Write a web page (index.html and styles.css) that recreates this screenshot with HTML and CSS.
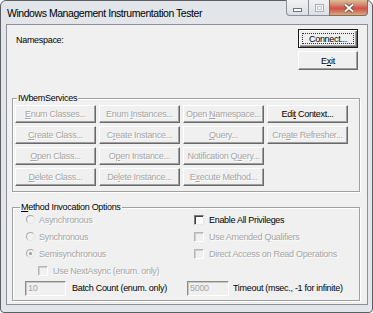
FILE: index.html
```html
<!DOCTYPE html>
<html lang="en">
<head>
	<meta charset="UTF-8">
	<title>Windows Management Instrumentation Tester</title>
	<link rel="stylesheet" href="styles.css">
</head>
<body>
	<div class="window">
		<div class="titlebar">
			<span class="title">Windows Management Instrumentation Tester</span>
			<div class="caption">
				<span class="cap-btn cap-min">
					<svg width="9" height="4" viewBox="0 0 9 4"><rect x="0.5" y="0.5" width="8" height="3" fill="#fff" stroke="#70757d"/></svg>
				</span>
				<span class="cap-btn cap-max">
					<svg width="9" height="8" viewBox="0 0 9 8"><rect x="0.5" y="0.5" width="8" height="7" fill="#f4f5f7" stroke="#a9adb4"/><rect x="2.5" y="2.5" width="4" height="3" fill="none" stroke="#c4c7cc"/></svg>
				</span>
				<span class="cap-btn cap-close">
					<svg width="12" height="10" viewBox="0 0 12 10"><path d="M2 1.5l8 7M10 1.5l-8 7" stroke="#5a4a44" stroke-width="3.4"/><path d="M2 1.5l8 7M10 1.5l-8 7" stroke="#fff" stroke-width="1.8"/></svg>
				</span>
			</div>
		</div>
		<div class="client">
			<div class="top">
				<span class="label">Namespace:</span>
				<div class="side">
					<div class="btn default"><span class="focus">Connect...</span></div>
					<div class="btn"><span>E<u>x</u>it</span></div>
				</div>
			</div>
			<fieldset class="group services">
				<legend>IWbemServices</legend>
				<div class="grid">
					<div class="btn off"><span><u>E</u>num Classes...</span></div>
					<div class="btn off"><span>Enum <u>I</u>nstances...</span></div>
					<div class="btn off"><span>Open <u>N</u>amespace...</span></div>
					<div class="btn"><span>Edi<u>t</u> Context...</span></div>
					<div class="btn off"><span><u>C</u>reate Class...</span></div>
					<div class="btn off"><span>C<u>r</u>eate Instance...</span></div>
					<div class="btn off"><span><u>Q</u>uery...</span></div>
					<div class="btn off"><span>Cre<u>a</u>te Refresher...</span></div>
					<div class="btn off"><span><u>O</u>pen Class...</span></div>
					<div class="btn off"><span>O<u>p</u>en Instance...</span></div>
					<div class="btn off"><span>Notification Q<u>u</u>ery...</span></div>
					<div></div>
					<div class="btn off"><span><u>D</u>elete Class...</span></div>
					<div class="btn off"><span>De<u>l</u>ete Instance...</span></div>
					<div class="btn off"><span>E<u>x</u>ecute Method...</span></div>
				</div>
			</fieldset>
			<fieldset class="group options">
				<legend><u>M</u>ethod Invocation Options</legend>
				<div class="opts">
					<div class="row off"><span class="radio"></span><span>Asynchronous</span></div>
					<div class="row right"><span class="check on"></span><span>Enable All Privileges</span></div>
					<div class="row off"><span class="radio"></span><span>Synchronous</span></div>
					<div class="row right off"><span class="check"></span><span>Use Amended Qualifiers</span></div>
					<div class="row off"><span class="radio checked"></span><span>Semisynchronous</span></div>
					<div class="row right off"><span class="check"></span><span>Direct Access on Read Operations</span></div>
					<div class="row indent off"><span class="check"></span><span>Use NextAsync (enum. only)</span></div>
					<div></div>
					<div class="row"><span class="field">10</span><span class="field-label">Batch Count (enum. only)</span></div>
					<div class="row"><span class="field wide">5000</span><span class="field-label near">Timeout (msec., -1 for infinite)</span></div>
				</div>
			</fieldset>
		</div>
	</div>
</body>
</html>
```
FILE: styles.css
```css
body{
	margin: 0;
	background: #fff;
	font-family: "Liberation Sans", Arial, sans-serif;
	font-size: 9px;
	letter-spacing: -0.3px;
	color: #000;
}
.window{
	width: 373px;
	height: 313px;
	box-sizing: border-box;
	border: 1px solid #5c6066;
	border-radius: 6px 6px 4px 4px;
	background: #e2e5e9;
	padding: 0 4px 7px 5px;
	display: flex;
	flex-direction: column;
}
.titlebar{
	height: 23px;
	flex: none;
	display: flex;
	align-items: flex-start;
}
.title{
	font-size: 10.5px;
	letter-spacing: -0.45px;
	line-height: 14px;
	padding: 5px 0 0 1px;
}
.caption{
	margin-left: auto;
	margin-top: -1px;
	display: flex;
}
.cap-btn{
	height: 16px;
	box-sizing: border-box;
	border: 1px solid #8d9198;
	border-top: none;
	display: flex;
	align-items: center;
	justify-content: center;
	background: linear-gradient(#f1f2f4, #dcdfe4);
}
.cap-min{
	width: 22px;
	border-right: none;
	border-radius: 0 0 0 4px;
	align-items: flex-end;
	padding-bottom: 3px;
}
.cap-max{
	width: 21px;
	border-right: none;
}
.cap-close{
	width: 39px;
	border-color: #8a6a5a;
	border-radius: 0 0 4px 0;
	background: linear-gradient(#d9c294, #d8806a 35%, #cc5248 55%, #d4745c 75%, #cdb083);
}
.client{
	flex: 1;
	border: 1px solid #8d9096;
	background: #f0f0f0;
	padding: 4px 7px 3px 5px;
	display: flex;
	flex-direction: column;
}
.top{
	display: flex;
	justify-content: space-between;
	padding: 0 2px 0 4px;
}
.label{
	line-height: 12px;
	margin-top: 5px;
}
.side{
	display: flex;
	flex-direction: column;
	gap: 3px;
}
.side .btn{
	width: 60px;
	height: 19px;
}
.btn{
	box-sizing: border-box;
	display: flex;
	align-items: center;
	justify-content: center;
	white-space: nowrap;
	background: #f0f0f0;
	border: 1px solid;
	border-color: #fff #696969 #696969 #fff;
	box-shadow: inset -1px -1px #a0a0a0;
}
.btn.default{
	border-color: #1a1a1a;
	box-shadow: inset 1px 1px #fff, inset -1px -1px #696969, inset -2px -2px #a0a0a0;
	padding: 3px;
	align-items: stretch;
}
.focus{
	flex: 1;
	border: 1px dotted #333;
	display: flex;
	align-items: center;
	justify-content: center;
}
.btn.off, .row.off{
	color: #a5a5a5;
	text-shadow: 1px 1px #fff;
}
.group{
	margin: 22px 0 0;
	padding: 0 0 5px 2px;
	border: 1px solid #a0a0a0;
	box-shadow: inset 1px 1px #fff, 1px 1px #fff;
	min-width: 0;
}
.group legend{
	padding: 0 1px;
	margin-left: 2px;
	line-height: 12px;
}
.grid{
	display: grid;
	grid-template-columns: repeat(4, 81px);
	grid-auto-rows: 18px;
	gap: 3px;
	margin-top: 1px;
}
.options{
	margin-top: 9px;
	padding: 0 0 3px 5px;
}
.opts{
	display: grid;
	grid-template-columns: 162px 1fr;
	grid-template-rows: repeat(4, 17px) 18px;
	margin-top: -2px;
	padding-left: 7px;
}
.row{
	display: flex;
	align-items: center;
	white-space: nowrap;
}
.row.right{
	padding-left: 7px;
}
.row.indent{
	padding-left: 13px;
}
.radio{
	width: 9px;
	height: 9px;
	box-sizing: border-box;
	border-radius: 50%;
	border: 1px solid;
	border-color: #a9a9a9 #e4e4e4 #e4e4e4 #a9a9a9;
	background: #f2f2f2;
	margin: 0 4px 0 1px;
	display: flex;
	align-items: center;
	justify-content: center;
}
.radio.checked::after{
	content: "";
	width: 3px;
	height: 3px;
	border-radius: 50%;
	background: #9a9a9a;
}
.check{
	width: 10px;
	height: 10px;
	box-sizing: border-box;
	border: 1px solid;
	border-color: #b4b4b4 #fff #fff #b4b4b4;
	box-shadow: inset 1px 1px #d0d0d0;
	background: #f0f0f0;
	margin-right: 5px;
}
.check.on{
	border-color: #7a7a7a #e8e8e8 #e8e8e8 #7a7a7a;
	box-shadow: inset 1px 1px #404040;
	background: #fff;
}
.field{
	width: 41px;
	height: 15px;
	box-sizing: border-box;
	border: 1px solid;
	border-color: #8a8a8a #fff #fff #8a8a8a;
	box-shadow: inset 1px 1px #c8c8c8;
	background: #f0f0f0;
	color: #a5a5a5;
	padding-left: 2px;
	line-height: 13px;
}
.field.wide{
	width: 42px;
}
.field-label{
	margin-left: 6px;
}
.field-label.near{
	margin-left: 4px;
}
```
